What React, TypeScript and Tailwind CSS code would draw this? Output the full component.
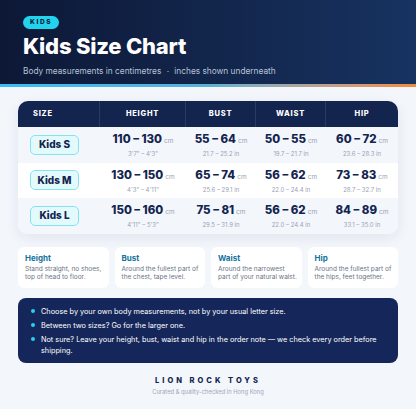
import React from "react";

const rows = [
  { size: "Kids S", bg: "bg-[#f3f7fc]", vals: [["110 – 130", "3'7\" – 4'3\""], ["55 – 64", "21.7 – 25.2 in"], ["50 – 55", "19.7 – 21.7 in"], ["60 – 72", "23.6 – 28.3 in"]] },
  { size: "Kids M", bg: "bg-white", vals: [["130 – 150", "4'3\" – 4'11\""], ["65 – 74", "25.6 – 29.1 in"], ["56 – 62", "22.0 – 24.4 in"], ["73 – 83", "28.7 – 32.7 in"]] },
  { size: "Kids L", bg: "bg-[#f3f7fc]", vals: [["150 – 160", "4'11\" – 5'3\""], ["75 – 81", "29.5 – 31.9 in"], ["56 – 62", "22.0 – 24.4 in"], ["84 – 89", "33.1 – 35.0 in"]] },
];

const tips = [
  { title: "Height", text: "Stand straight, no shoes, top of head to floor." },
  { title: "Bust", text: "Around the fullest part of the chest, tape level." },
  { title: "Waist", text: "Around the narrowest part of your natural waist." },
  { title: "Hip", text: "Around the fullest part of the hips, feet together." },
];

const notes = [
  "Choose by your own body measurements, not by your usual letter size.",
  "Between two sizes? Go for the larger one.",
  "Not sure? Leave your height, bust, waist and hip in the order note — we check every order before shipping.",
];

const cols = "grid grid-cols-[82px_86px_70px_70px_1fr]";

export default function App() {
  return (
    <div className="w-[416px] h-[409px] bg-[#f3f6fb] overflow-hidden" style={{ fontFamily: "Inter, 'Noto Sans', sans-serif" }}>
      <div className="bg-gradient-to-r from-[#0d1836] to-[#173361] px-[23px] pt-[16px] h-[84px]">
        <div className="flex">
          <span className="flex items-center h-[13px] px-[7px] rounded-full bg-[#22d3ee] text-[#0d1836] text-[6.5px] leading-none font-extrabold tracking-[0.25em]">KIDS</span>
        </div>
        <h1 className="text-white text-[22px] leading-[24px] font-extrabold tracking-[-0.01em] mt-[5px]">Kids Size Chart</h1>
        <p className="text-[#b8c2d6] text-[8.3px] leading-[12px] mt-[7px]">Body measurements in centimetres <span className="mx-[3px]">·</span> inches shown underneath</p>
      </div>
      <div className="h-[3px] bg-gradient-to-r from-[#38bdf8] via-[#5ab0d8] to-[#f5893a]" />

      <div className="mx-[18px] mt-[14px] rounded-[10px] overflow-hidden bg-white shadow-[0_4px_14px_rgba(20,40,90,0.08)]">
        <div className={`${cols} bg-[#13244f] h-[26px] text-white text-[7.5px] font-extrabold tracking-[0.1em]`}>
          <div className="flex items-center pl-[15px] border-r border-white/10">SIZE</div>
          <div className="flex items-center justify-center border-r border-white/10">HEIGHT</div>
          <div className="flex items-center justify-center border-r border-white/10">BUST</div>
          <div className="flex items-center justify-center border-r border-white/10">WAIST</div>
          <div className="flex items-center justify-center">HIP</div>
        </div>
        {rows.map((r) => (
          <div key={r.size} className={`${cols} ${r.bg} h-[35.5px]`}>
            <div className="flex items-center pl-[12px]">
              <span className="w-[49px] h-[20px] flex items-center justify-center rounded-[5px] bg-[#e3fafd] border border-[#86e3ee] text-[#13244f] text-[10px] font-extrabold">{r.size}</span>
            </div>
            {r.vals.map(([v, s], i) => (
              <div key={i} className="flex flex-col items-center justify-center">
                <div className="leading-[13px] whitespace-nowrap">
                  <span className="text-[#13244f] text-[11.5px] font-extrabold">{v}</span>
                  <span className="text-[#9aa3b4] text-[6.5px] ml-[2px]">cm</span>
                </div>
                <div className="text-[#9aa3b4] text-[6px] leading-[8px] mt-[2px]">{s}</div>
              </div>
            ))}
          </div>
        ))}
      </div>

      <div className="mx-[18px] mt-[13px] grid grid-cols-4 gap-[6px]">
        {tips.map((t) => (
          <div key={t.title} className="bg-white rounded-[6px] h-[41px] pl-[7px] pr-[4px] pt-[6px]">
            <div className="text-[#13729a] text-[8px] font-bold leading-[10px]">{t.title}</div>
            <div className="text-[#6b7385] text-[6.5px] leading-[8.5px] mt-[2px]">{t.text}</div>
          </div>
        ))}
      </div>

      <div className="mx-[18px] mt-[10px] rounded-[8px] bg-[#15275a] pl-[13px] pr-[12px] pt-[8px] pb-[7px] flex flex-col gap-[3px]">
        {notes.map((n) => (
          <div key={n} className="flex items-start gap-[6px] text-white text-[7.3px] leading-[11px]">
            <span className="w-[4px] h-[4px] rounded-full bg-[#22d3ee] mt-[3.5px] shrink-0" />
            <span>{n}</span>
          </div>
        ))}
      </div>

      <div className="text-center mt-[13px]">
        <div className="text-[#13244f] text-[7.5px] font-extrabold tracking-[0.4em] leading-[10px]">LION ROCK TOYS</div>
        <div className="text-[#a0a8b8] text-[5.8px] leading-[8px] mt-[2px]">Curated &amp; quality-checked in Hong Kong</div>
      </div>
    </div>
  );
}
